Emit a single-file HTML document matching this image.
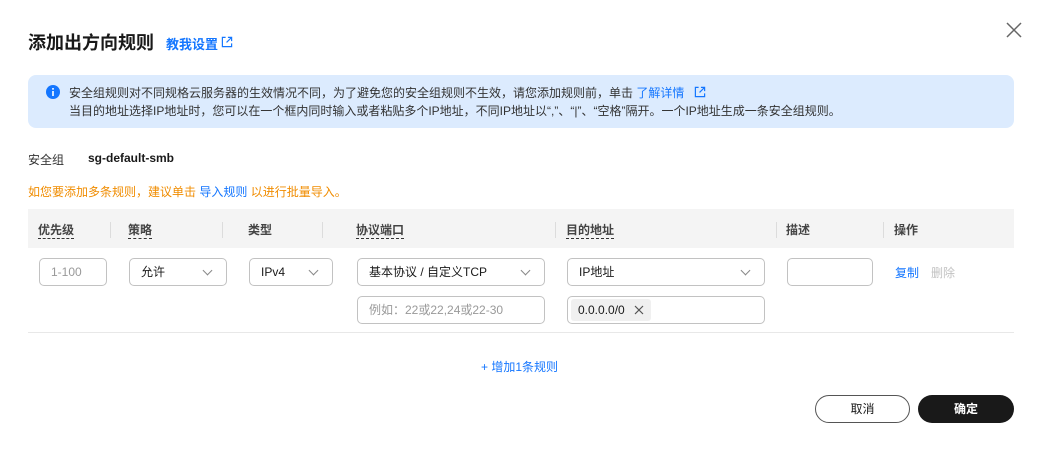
<!DOCTYPE html>
<html><head><meta charset="utf-8"><style>
*{box-sizing:border-box;margin:0;padding:0}
body{width:1040px;height:450px;background:#fff;font-family:"Liberation Sans","Noto Sans CJK SC",sans-serif;color:#191919;position:relative;overflow:hidden;font-size:12px}
.a{position:absolute;white-space:nowrap}
.blue{color:#1476ff}
.inp{position:absolute;height:28px;border:1px solid #c2c2c2;border-radius:5px;font-size:12px;line-height:26px;padding-left:11px}
.chev{position:absolute;right:15px;top:8px;width:7px;height:7px;border-right:1px solid #888;border-bottom:1px solid #888;transform:rotate(45deg)}
.th{position:absolute;top:221px;font-size:12px;color:#444;font-weight:bold}
.dash{border-bottom:1px dashed #333;padding-bottom:1px}
.sep{position:absolute;top:222px;width:1px;height:16px;background:#dcdcdc}
</style></head><body>
<div class="a" style="left:28px;top:29px;font-size:18px;font-weight:bold;color:#191919">添加出方向规则</div>
<div class="a blue" style="left:166px;top:34px;font-size:13px;font-weight:bold">教我设置</div>
<svg class="a" style="left:221px;top:36px" width="12" height="12" viewBox="0 0 13 13"><path d="M5 1.5H1.5v10h10V8M7.5 1.5h4v4M11.5 1.5L6 7" fill="none" stroke="#1476ff" stroke-width="1.3"/></svg>
<svg class="a" style="left:1006px;top:22px" width="16" height="16" viewBox="0 0 16 16"><path d="M1 1L15 15M15 1L1 15" stroke="#666" stroke-width="1.5"/></svg>

<div class="a" style="left:28px;top:75px;width:986px;height:53px;background:#dcebfe;border-radius:8px"></div>
<svg class="a" style="left:46px;top:85px" width="14" height="14" viewBox="0 0 14 14"><circle cx="7" cy="7" r="7" fill="#1476ff"/><rect x="6.2" y="6" width="1.6" height="5" fill="#fff"/><rect x="6.2" y="3" width="1.6" height="1.7" fill="#fff"/></svg>
<div class="a" style="left:69px;top:84px;font-size:12px;color:#333">安全组规则对不同规格云服务器的生效情况不同，为了避免您的安全组规则不生效，请您添加规则前，单击 <span class="blue">了解详情</span></div>
<svg class="a" style="left:694px;top:86px" width="12" height="12" viewBox="0 0 13 13"><path d="M5 1.5H1.5v10h10V8M7.5 1.5h4v4M11.5 1.5L6 7" fill="none" stroke="#1476ff" stroke-width="1.3"/></svg>
<div class="a" style="left:69px;top:102px;font-size:12px;color:#333">当目的地址选择IP地址时，您可以在一个框内同时输入或者粘贴多个IP地址，不同IP地址以“,”、“|”、“空格”隔开。一个IP地址生成一条安全组规则。</div>

<div class="a" style="left:28px;top:151px;font-size:12px;color:#333">安全组</div>
<div class="a" style="left:88px;top:151px;font-size:12px;font-weight:bold">sg-default-smb</div>
<div class="a" style="left:28px;top:183px;font-size:12px;color:#f08c00">如您要添加多条规则，建议单击 <span class="blue">导入规则</span> 以进行批量导入。</div>

<div class="a" style="left:28px;top:209px;width:986px;height:39px;background:#f4f4f4"></div>
<div class="th" style="left:38px"><span class="dash">优先级</span></div>
<div class="th" style="left:128px"><span class="dash">策略</span></div>
<div class="th" style="left:248px">类型</div>
<div class="th" style="left:356px"><span class="dash">协议端口</span></div>
<div class="th" style="left:566px"><span class="dash">目的地址</span></div>
<div class="th" style="left:786px">描述</div>
<div class="th" style="left:894px">操作</div>
<div class="sep" style="left:110px"></div><div class="sep" style="left:222px"></div><div class="sep" style="left:322px"></div><div class="sep" style="left:555px"></div><div class="sep" style="left:776px"></div><div class="sep" style="left:883px"></div>

<div class="inp" style="left:39px;top:258px;width:68px;color:#999">1-100</div>
<div class="inp" style="left:129px;top:258px;width:98px">允许<span class="chev"></span></div>
<div class="inp" style="left:249px;top:258px;width:84px">IPv4<span class="chev"></span></div>
<div class="inp" style="left:357px;top:258px;width:188px">基本协议 / 自定义TCP<span class="chev"></span></div>
<div class="inp" style="left:567px;top:258px;width:198px">IP地址<span class="chev"></span></div>
<div class="inp" style="left:787px;top:258px;width:86px"></div>
<div class="a blue" style="left:895px;top:264px">复制</div>
<div class="a" style="left:931px;top:264px;color:#c2c2c2">删除</div>
<div class="inp" style="left:357px;top:296px;width:188px;color:#999">例如：22或22,24或22-30</div>
<div class="inp" style="left:567px;top:296px;width:198px;padding-left:3px"><span style="display:inline-block;background:#f0f0f0;border-radius:3px;height:22px;line-height:22px;margin-top:2px;padding:0 26px 0 7px;position:relative">0.0.0.0/0<svg style="position:absolute;right:7px;top:6px" width="10" height="10" viewBox="0 0 10 10"><path d="M1 1L9 9M9 1L1 9" stroke="#555" stroke-width="1.2"/></svg></span></div>
<div class="a" style="left:28px;top:332px;width:986px;height:1px;background:#e8e8e8"></div>

<div class="a blue" style="left:481px;top:358px">+ 增加1条规则</div>
<div class="a" style="left:815px;top:395px;width:95px;height:28px;border:1px solid #555;border-radius:14px;text-align:center;line-height:26px">取消</div>
<div class="a" style="left:918px;top:395px;width:96px;height:28px;background:#191919;color:#fff;border-radius:14px;text-align:center;line-height:28px;font-weight:bold">确定</div>
</body></html>
